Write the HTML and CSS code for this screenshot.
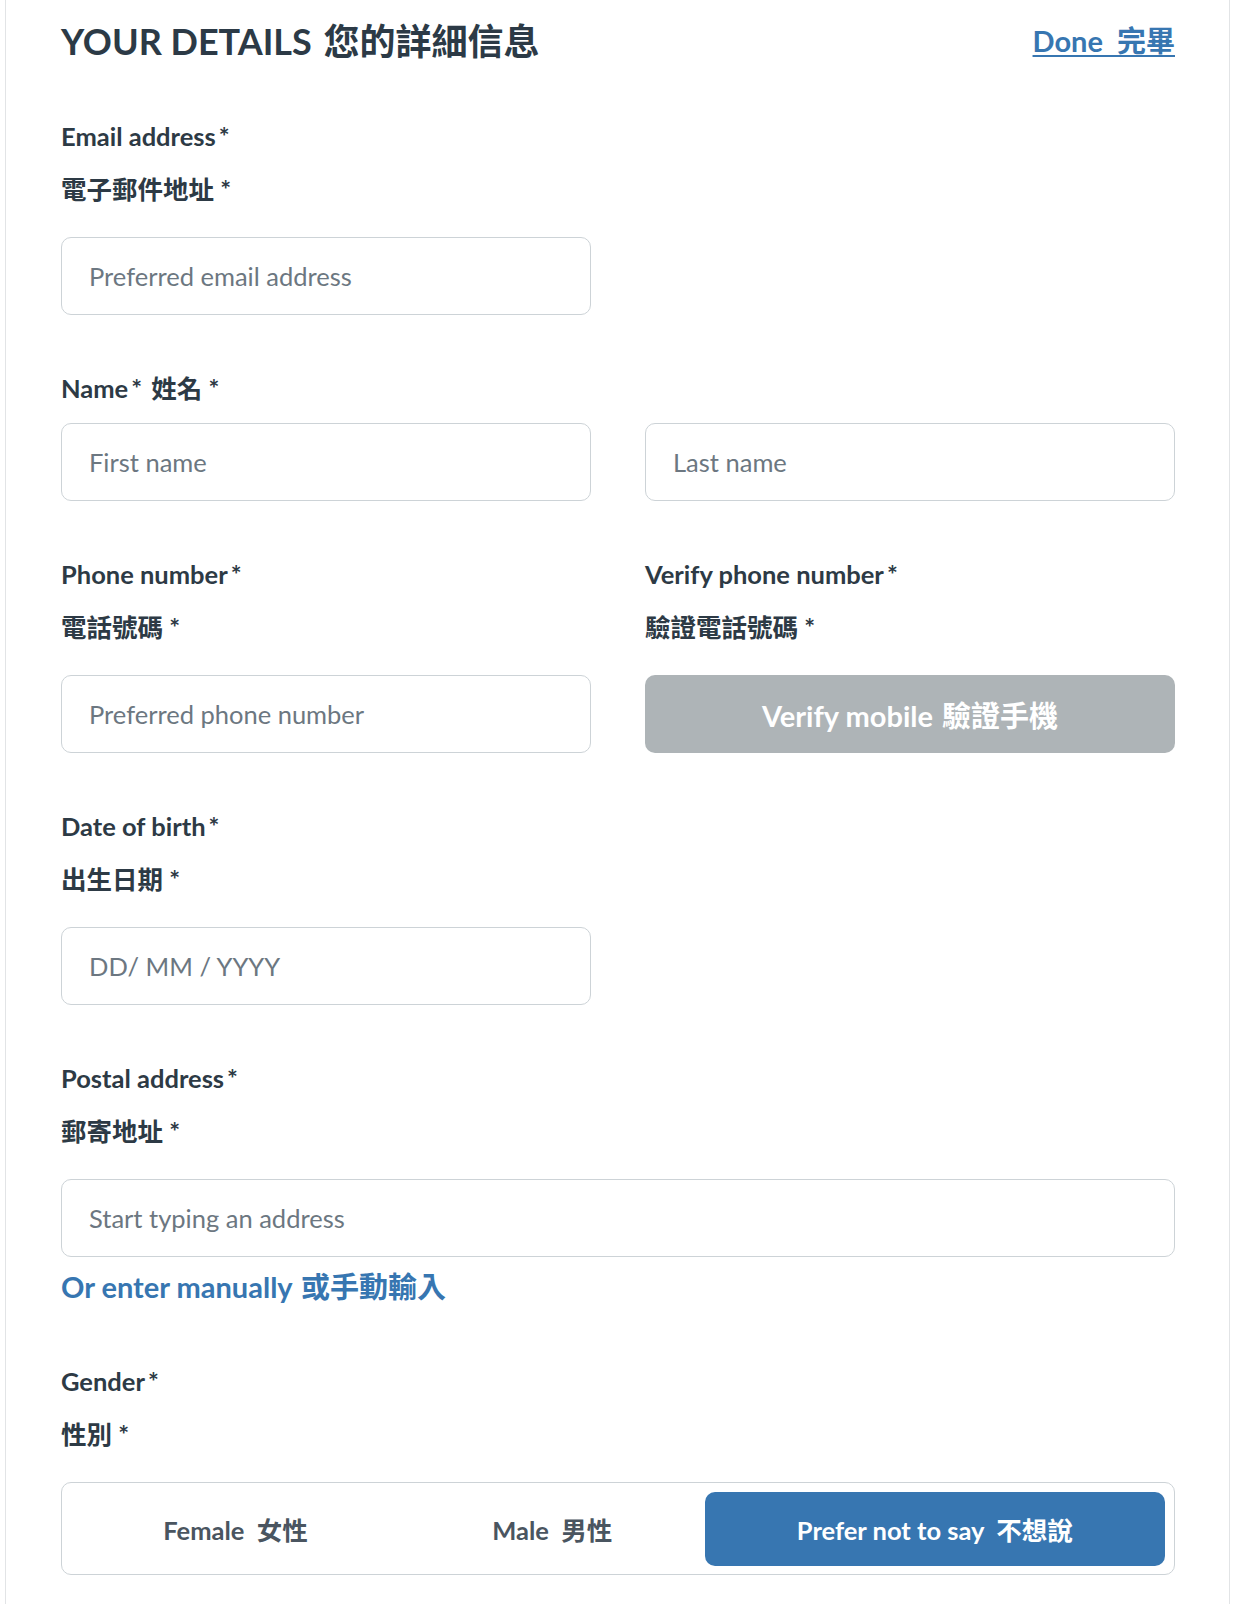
FILE: index.html
```html
<!DOCTYPE html>
<html lang="zh-Hant">
<head>
<meta charset="utf-8">
<title>Your details</title>
<link rel="stylesheet" href="styles.css">
</head>
<body>
<div class="card">
  <div class="header">
    <h1 class="title">YOUR DETAILS <span class="title-zh">您的詳細信息</span></h1>
    <a class="done-link" href="#">Done&nbsp; 完畢</a>
  </div>

  <div class="row">
    <div class="field">
      <div class="label-en">Email address<span class="req">*</span></div>
      <div class="label-zh">電子郵件地址 *</div>
      <input class="text-input" type="email" placeholder="Preferred email address">
    </div>
  </div>

  <div class="field-block">
    <div class="label-single">Name<span class="req">*</span> <span class="title-zh">姓名</span> *</div>
    <div class="row row-tight">
      <input class="text-input" type="text" placeholder="First name">
      <input class="text-input" type="text" placeholder="Last name">
    </div>
  </div>

  <div class="row">
    <div class="field">
      <div class="label-en">Phone number<span class="req">*</span></div>
      <div class="label-zh">電話號碼 *</div>
      <input class="text-input" type="tel" placeholder="Preferred phone number">
    </div>
    <div class="field">
      <div class="label-en">Verify phone number<span class="req">*</span></div>
      <div class="label-zh">驗證電話號碼 *</div>
      <button class="verify-btn" type="button">Verify mobile <span class="zh">驗證手機</span></button>
    </div>
  </div>

  <div class="row">
    <div class="field">
      <div class="label-en">Date of birth<span class="req">*</span></div>
      <div class="label-zh">出生日期 *</div>
      <input class="text-input" type="text" placeholder="DD/ MM / YYYY">
    </div>
  </div>

  <div class="field-block">
    <div class="label-en">Postal address<span class="req">*</span></div>
    <div class="label-zh">郵寄地址 *</div>
    <input class="text-input" type="text" placeholder="Start typing an address">
    <a class="manual-link" href="#">Or enter manually <span class="zh">或手動輸入</span></a>
  </div>

  <div class="field-block">
    <div class="label-en">Gender<span class="req">*</span></div>
    <div class="label-zh">性別 *</div>
    <div class="segmented">
      <button class="seg-option" type="button">Female&nbsp; 女性</button>
      <button class="seg-option" type="button">Male&nbsp; 男性</button>
      <button class="seg-option seg-active" type="button">Prefer not to say&nbsp; 不想說</button>
    </div>
  </div>
</div>
</body>
</html>
```

FILE: styles.css
```css
html, body {
  margin: 0;
  padding: 0;
  background: #ffffff;
}

body {
  font-family: "Lato", "Noto Sans CJK TC", sans-serif;
  color: #2d3a45;
}

.card {
  margin-left: 5px;
  width: 1225px;
  min-height: 1604px;
  box-sizing: border-box;
  padding: 20px 54px 0 55px;
  border-left: 1px solid #e2e4e6;
  border-right: 1px solid #e2e4e6;
}

.header {
  display: flex;
  align-items: center;
  justify-content: space-between;
  margin-bottom: 55px;
}

.title {
  margin: 0;
  font-size: 36px;
  line-height: 1.2;
  font-weight: 700;
  color: #2c3a46;
}

.title-zh {
  margin-left: 3px;
}

.zh {
  margin-left: 2px;
}

.done-link {
  font-size: 29px;
  line-height: 1.2;
  font-weight: 700;
  color: #3776b1;
  text-decoration: underline;
  text-decoration-thickness: 2px;
  text-underline-offset: 3px;
}

.row {
  display: grid;
  grid-template-columns: 1fr 1fr;
  column-gap: 54px;
  margin-bottom: 55px;
}

.row-tight {
  margin-bottom: 0;
}

.field-block {
  margin-bottom: 55px;
}

.field {
  display: flex;
  flex-direction: column;
}

.label-en,
.label-zh,
.label-single {
  font-size: 25.5px;
  line-height: 36px;
  font-weight: 700;
  color: #2d3a45;
}

.label-en {
  margin-bottom: 17px;
}

.label-zh {
  margin-bottom: 30px;
}

.label-single {
  margin-bottom: 17px;
}

.req {
  margin-left: 3px;
}

.text-input {
  display: block;
  width: 100%;
  height: 78px;
  box-sizing: border-box;
  border: 1px solid #cdd3d7;
  border-radius: 10px;
  padding: 0 27px;
  font-family: "Lato", "Noto Sans CJK TC", sans-serif;
  font-size: 25.5px;
  color: #2d3a45;
  background: #ffffff;
  outline: none;
}

.text-input::placeholder {
  color: #6c7781;
  opacity: 1;
}

.verify-btn {
  display: block;
  width: 100%;
  height: 78px;
  border: none;
  border-radius: 10px;
  background: #aeb4b7;
  color: #ffffff;
  font-family: "Lato", "Noto Sans CJK TC", sans-serif;
  font-size: 29px;
  font-weight: 700;
  cursor: default;
}

.manual-link {
  display: block;
  margin-top: 13px;
  padding-bottom: 3px;
  font-size: 29px;
  line-height: 1.2;
  font-weight: 700;
  color: #3776b1;
  text-decoration: none;
}

.segmented {
  display: flex;
  height: 93px;
  box-sizing: border-box;
  border: 1px solid #cdd3d7;
  border-radius: 10px;
  padding: 9px;
}

.seg-option {
  flex: 1 1 auto;
  height: 74px;
  border: none;
  border-radius: 10px;
  background: transparent;
  color: #4a5560;
  font-family: "Lato", "Noto Sans CJK TC", sans-serif;
  font-size: 25.5px;
  font-weight: 700;
  padding: 0;
}

.seg-active {
  background: #3776b1;
  color: #ffffff;
}
```
